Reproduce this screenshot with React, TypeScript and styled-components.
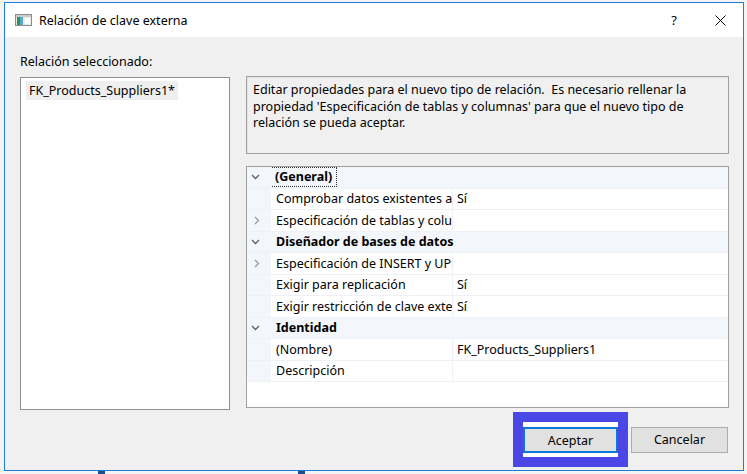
import React from "react";
import styled, { createGlobalStyle } from "styled-components";

const Global = createGlobalStyle`
  html, body { margin: 0; padding: 0; background: #f4f4f4; }
  body { font-family: "Noto Sans", "Open Sans", sans-serif; font-size: 12.5px; color: #000; }
  * { box-sizing: border-box; }
`;

const Page = styled.div`
  width: 747px;
  height: 474px;
  padding: 2px 3px 0 4px;
  display: flex;
  flex-direction: column;
  overflow: hidden;
`;

const Window = styled.div`
  width: 740px;
  height: 469px;
  border: 1px solid #1c7fd4;
  background: #f0f0f0;
  display: flex;
  flex-direction: column;
`;

const TitleBar = styled.div`
  height: 34px;
  background: #ffffff;
  display: flex;
  align-items: center;
  padding: 0 0 0 10px;
`;

const TitleText = styled.span`
  margin-left: 7px;
  font-size: 12.5px;
  flex: 1;
`;

const TitleButton = styled.div`
  width: 46px;
  height: 34px;
  display: flex;
  align-items: center;
  justify-content: center;
  font-size: 13px;
`;

const Client = styled.div`
  flex: 1;
  display: flex;
  flex-direction: column;
  padding: 16px 14px 0 15px;
`;

const Label = styled.div`
  height: 18px;
  line-height: 18px;
  margin-bottom: 6px;
`;

const Main = styled.div`
  display: flex;
  gap: 16px;
  align-items: flex-start;
  height: 333px;
`;

const ListBox = styled.div`
  width: 210px;
  height: 333px;
  background: #fff;
  border: 1px solid #8e9197;
  padding: 3px 5px;
`;

const ListItem = styled.div`
  display: inline-block;
  background: #efefef;
  padding: 0 3px;
  height: 19px;
  line-height: 19px;
`;

const RightPanel = styled.div`
  width: 483px;
  display: flex;
  flex-direction: column;
  gap: 12px;
  margin-top: -1px;
`;

const Description = styled.div`
  height: 78px;
  border: 1px solid #a0a0a0;
  box-shadow: inset 1px 1px 0 #e3e3e3;
  padding: 5px 6px;
  line-height: 16.5px;
  white-space: pre-wrap;
`;

const Grid = styled.div`
  height: 242px;
  border: 1px solid #a0a0a0;
  background: #fff;
  display: flex;
  flex-direction: column;
`;

const Row = styled.div<{ $cat?: boolean }>`
  height: 21.5px;
  display: grid;
  grid-template-columns: 24px 182px 1fr;
  background: ${(p) => (p.$cat ? "#f3f6fa" : "#ffffff")};
  border-bottom: 1px solid #eef1f6;
  font-weight: ${(p) => (p.$cat ? 700 : 400)};
`;

const Gutter = styled.div`
  background: #f3f6fa;
  display: flex;
  align-items: center;
  justify-content: center;
  padding-right: 7px;
`;

const NameCell = styled.div<{ $cat?: boolean }>`
  padding-left: ${(p) => (p.$cat ? "0" : "5px")};
  border-right: ${(p) => (p.$cat ? "none" : "1px solid #eef1f6")};
  white-space: nowrap;
  overflow: hidden;
  display: flex;
  align-items: center;
  ${(p) => (p.$cat ? "grid-column: 2 / 4;" : "")}
`;

const Focus = styled.span`
  border: 1px dotted #333;
  padding: 0 4px;
  line-height: 18px;
  margin-left: -1px;
`;

const CatName = styled.span`
  padding-left: 5px;
`;

const ValueCell = styled.div`
  padding-left: 4px;
  white-space: nowrap;
  overflow: hidden;
  display: flex;
  align-items: center;
`;

const ButtonRow = styled.div`
  margin-top: 2px;
  display: flex;
  justify-content: flex-end;
  align-items: center;
  gap: 3px;
  padding-right: 1px;
`;

const Highlight = styled.div`
  border: 10px solid #4b47e6;
  background: #ffffff;
  padding: 5px 0 4px;
  display: flex;
`;

const Button = styled.button<{ $default?: boolean }>`
  width: ${(p) => (p.$default ? "95px" : "97px")};
  height: 26px;
  font-family: inherit;
  font-size: 12.5px;
  color: #000;
  background: #e1e1e1;
  border: ${(p) => (p.$default ? "2px solid #0a78d6" : "1px solid #adadad")};
  padding: 0;
`;

const BottomStrip = styled.div`
  height: 3px;
  display: flex;
`;

const Mark = styled.div<{ $ml: number }>`
  width: 7px;
  height: 3px;
  background: #1d4f8f;
  margin-left: ${(p) => p.$ml}px;
`;

const Chevron = ({ open }: { open: boolean }) =>
  open ? (
    <svg width="9" height="6" viewBox="0 0 9 6">
      <path d="M1 1 L4.5 4.5 L8 1" fill="none" stroke="#5f5f5f" strokeWidth="1.3" />
    </svg>
  ) : (
    <svg width="6" height="9" viewBox="0 0 6 9" style={{ marginLeft: 3 }}>
      <path d="M1 1 L4.5 4.5 L1 8" fill="none" stroke="#9a9a9a" strokeWidth="1.3" />
    </svg>
  );

const AppIcon = () => (
  <svg width="17" height="12" viewBox="0 0 17 12">
    <rect x="0.5" y="0.5" width="16" height="11" fill="#e8e8e8" stroke="#8c8c8c" />
    <rect x="1" y="1" width="15" height="2" fill="#c9c9c9" />
    <rect x="2" y="3" width="6" height="8" fill="#2f8f5f" />
    <rect x="5" y="3" width="3" height="8" fill="#5aa9c9" />
    <rect x="10" y="4" width="5" height="6" fill="#ffffff" />
  </svg>
);

const CloseIcon = () => (
  <svg width="11" height="11" viewBox="0 0 11 11">
    <path d="M0.5 0.5 L10.5 10.5 M10.5 0.5 L0.5 10.5" stroke="#000" strokeWidth="1" />
  </svg>
);

type Item =
  | { kind: "cat"; name: string; focus?: boolean }
  | { kind: "prop"; name: string; value?: string; expandable?: boolean };

const rows: Item[] = [
  { kind: "cat", name: "(General)", focus: true },
  { kind: "prop", name: "Comprobar datos existentes al crear o volver a habilitar", value: "Sí" },
  { kind: "prop", name: "Especificación de tablas y columnas", expandable: true },
  { kind: "cat", name: "Diseñador de bases de datos" },
  { kind: "prop", name: "Especificación de INSERT y UPDATE", expandable: true },
  { kind: "prop", name: "Exigir para replicación", value: "Sí" },
  { kind: "prop", name: "Exigir restricción de clave externa", value: "Sí" },
  { kind: "cat", name: "Identidad" },
  { kind: "prop", name: "(Nombre)", value: "FK_Products_Suppliers1" },
  { kind: "prop", name: "Descripción", value: "" },
];

export default function App() {
  return (
    <>
      <Global />
      <Page>
        <Window>
          <TitleBar>
            <AppIcon />
            <TitleText>Relación de clave externa</TitleText>
            <TitleButton>?</TitleButton>
            <TitleButton>
              <CloseIcon />
            </TitleButton>
          </TitleBar>
          <Client>
            <Label>Relación seleccionado:</Label>
            <Main>
              <ListBox>
                <ListItem>FK_Products_Suppliers1*</ListItem>
              </ListBox>
              <RightPanel>
                <Description>
                  {"Editar propiedades para el nuevo tipo de relación.  Es necesario rellenar la\npropiedad 'Especificación de tablas y columnas' para que el nuevo tipo de\nrelación se pueda aceptar."}
                </Description>
                <Grid>
                  {rows.map((r, i) =>
                    r.kind === "cat" ? (
                      <Row key={i} $cat>
                        <Gutter>
                          <Chevron open />
                        </Gutter>
                        <NameCell $cat>
                          {r.focus ? <Focus>{r.name}</Focus> : <CatName>{r.name}</CatName>}
                        </NameCell>
                      </Row>
                    ) : (
                      <Row key={i}>
                        <Gutter>{r.expandable ? <Chevron open={false} /> : null}</Gutter>
                        <NameCell>{r.name}</NameCell>
                        <ValueCell>{r.value}</ValueCell>
                      </Row>
                    )
                  )}
                </Grid>
              </RightPanel>
            </Main>
            <ButtonRow>
              <Highlight>
                <Button $default>Aceptar</Button>
              </Highlight>
              <Button>Cancelar</Button>
            </ButtonRow>
          </Client>
        </Window>
        <BottomStrip>
          <Mark $ml={94} />
          <Mark $ml={193} />
        </BottomStrip>
      </Page>
    </>
  );
}
